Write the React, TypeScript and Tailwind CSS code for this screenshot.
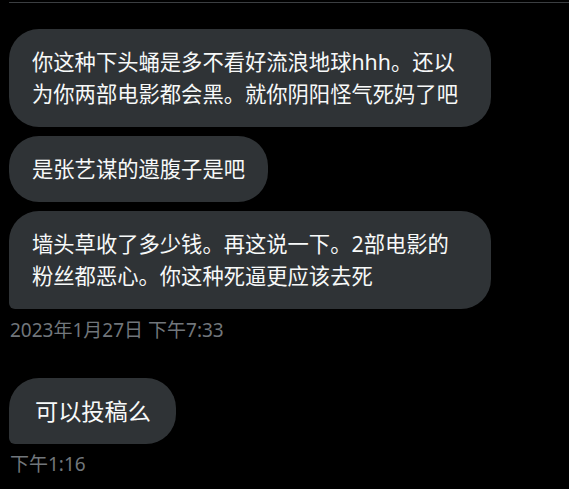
import React from "react";

const font = { fontFamily: '"Noto Sans", "Noto Sans CJK SC", sans-serif' };

function Bubble({
  children,
  wide,
  last,
  extra = "text-[21.3px] px-[23px]",
}: {
  children: React.ReactNode;
  wide?: boolean;
  last?: boolean;
  extra?: string;
}) {
  return (
    <div
      className={
        "bg-[#2f3336] text-[#f7f9f9] py-[17px] leading-[32px] rounded-[30px] " +
        extra +
        " " +
        (wide ? "w-[482px]" : "w-fit") +
        (last ? " rounded-bl-[6px]" : "")
      }
    >
      {children}
    </div>
  );
}

export default function App() {
  return (
    <div className="w-[569px] h-[489px] bg-black overflow-hidden" style={font}>
      <div className="pt-[2px] pl-[9px]">
        <div className="h-px bg-[#3b3e41]" />
      </div>
      <div className="pl-[9px] pt-[26px] flex flex-col">
        <div className="flex flex-col gap-[9px]">
          <Bubble wide>
            你这种下头蛹是多不看好流浪地球hhh。还以
            <br />
            为你两部电影都会黑。就你阴阳怪气死妈了吧
          </Bubble>
          <Bubble>是张艺谋的遗腹子是吧</Bubble>
          <Bubble wide last>
            墙头草收了多少钱。再这说一下。2部电影的
            <br />
            粉丝都恶心。你这种死逼更应该去死
          </Bubble>
        </div>
        <div className="mt-[9px] pl-px text-[19px] leading-[24px] text-[#71767b]">
          2023年1月27日 下午7:33
        </div>
        <div className="mt-[36px]">
          <Bubble last extra="text-[23.2px] pl-[26px] pr-[25px]">
            可以投稿么
          </Bubble>
        </div>
        <div className="mt-[8px] pl-px text-[19px] leading-[24px] text-[#71767b]">
          下午1:16
        </div>
      </div>
    </div>
  );
}
